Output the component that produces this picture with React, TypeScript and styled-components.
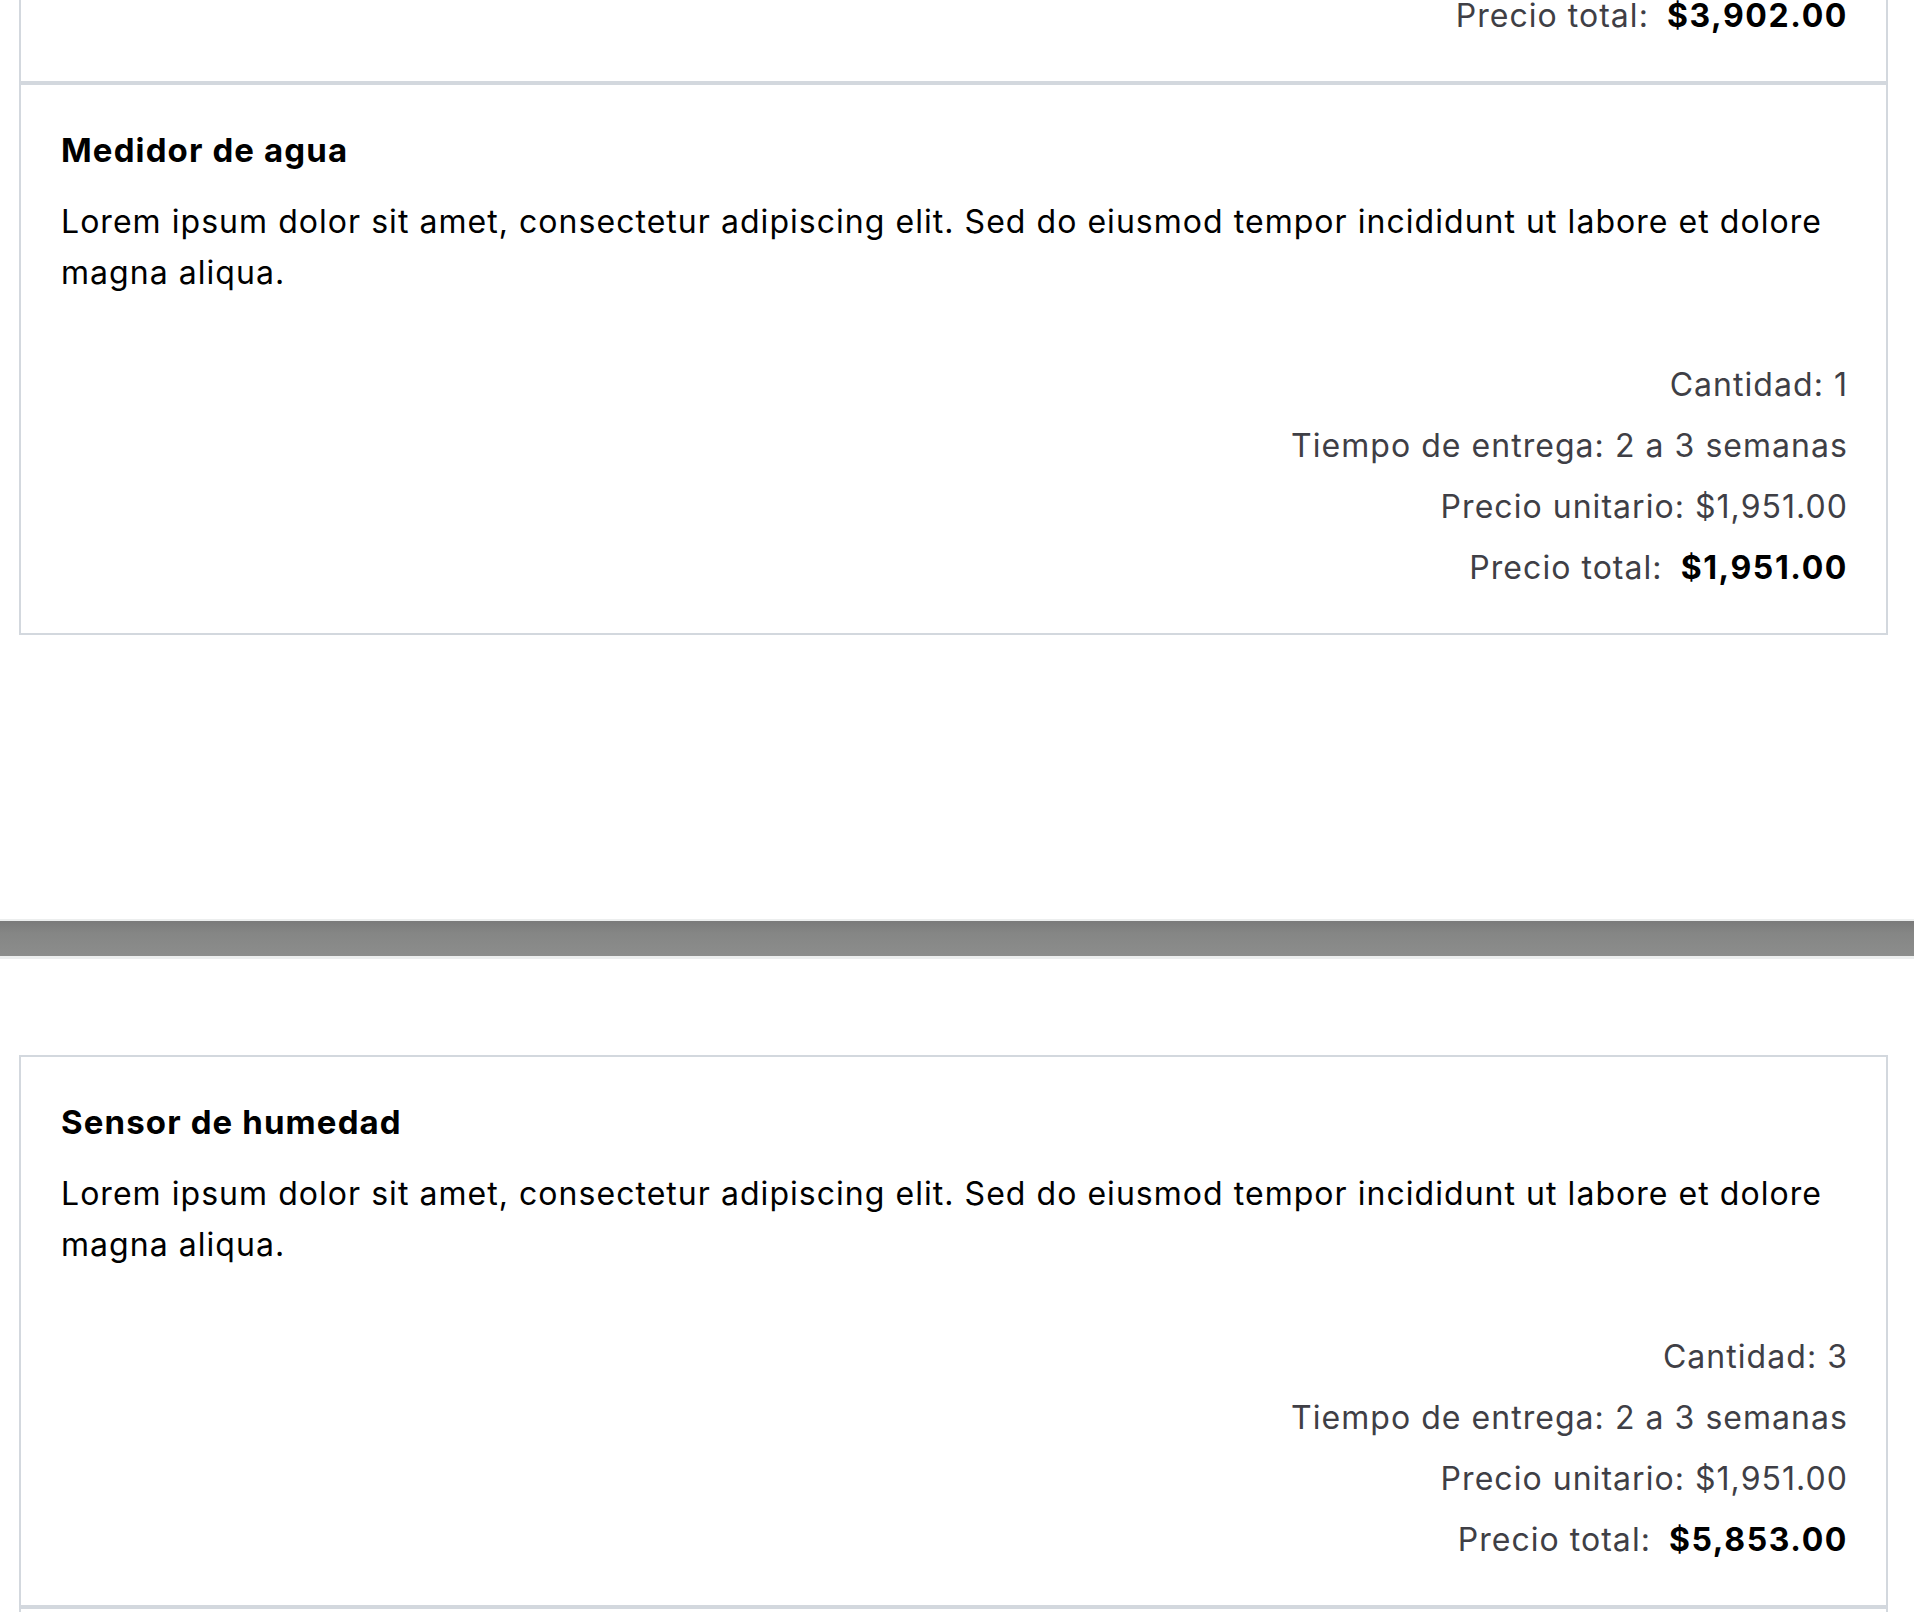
import React from "react";
import styled, { createGlobalStyle } from "styled-components";

const GlobalStyle = createGlobalStyle`
  html, body {
    margin: 0;
    padding: 0;
    background: #ffffff;
    overflow: hidden;
  }
  body {
    font-family: Inter, "Noto Sans", "Liberation Sans", sans-serif;
    color: #000000;
    letter-spacing: 0.065em;
    -webkit-font-smoothing: antialiased;
  }
  * { box-sizing: border-box; }
`;

const Viewer = styled.div`
  display: flex;
  flex-direction: column;
  width: 1914px;
  height: 1612px;
  overflow: hidden;
  background: #ffffff;
`;

const Page = styled.section<{ $top: number; $bottom: number; $shift?: number }>`
  display: flex;
  flex-direction: column;
  padding: ${(p) => p.$top}px 26px ${(p) => p.$bottom}px 19px;
  margin-top: ${(p) => (p.$shift ? `${p.$shift}px` : "0")};
  background: #ffffff;
  flex-shrink: 0;
`;

const PageBreak = styled.div`
  flex-shrink: 0;
  height: 40px;
  border-top: 2px solid #eceeee;
  border-bottom: 3px solid #eceeee;
  background: linear-gradient(to bottom, #7a7a7a 0%, #858685 35%, #8c8d8c 100%);
`;

const Card = styled.article`
  display: flex;
  flex-direction: column;
  border: 2px solid #d3d8de;
  padding: 40px;
`;

const Title = styled.h3`
  margin: 0;
  font-size: 33px;
  line-height: 51px;
  font-weight: 700;
  letter-spacing: 0.034em;
  color: #000000;
`;

const Description = styled.p`
  margin: 20px 0 0;
  font-size: 32px;
  line-height: 1.6;
  font-weight: 400;
  color: #000000;
`;

const Details = styled.div`
  display: flex;
  flex-direction: column;
  align-items: flex-end;
  gap: 10px;
  margin-top: 60px;
  margin-right: -2px;
`;

const DetailRow = styled.div`
  font-size: 32px;
  line-height: 1.6;
  color: #3f3f46;
  white-space: pre;
`;

const Total = styled.strong`
  margin-left: 8px;
  font-weight: 700;
  letter-spacing: 0.05em;
  color: #000000;
`;

type Product = {
  name: string;
  qty: number;
  unit: string;
  total: string;
};

const LOREM =
  "Lorem ipsum dolor sit amet, consectetur adipiscing elit. Sed do eiusmod tempor incididunt ut labore et dolore magna aliqua.";

const ProductCard: React.FC<{ product: Product }> = ({ product }) => (
  <Card>
    <Title>{product.name}</Title>
    <Description>{LOREM}</Description>
    <Details>
      <DetailRow>Cantidad: {product.qty}</DetailRow>
      <DetailRow>Tiempo de entrega: 2 a 3 semanas</DetailRow>
      <DetailRow>Precio unitario: {product.unit}</DetailRow>
      <DetailRow>
        Precio total: <Total>{product.total}</Total>
      </DetailRow>
    </Details>
  </Card>
);

const pageOne: Product[] = [
  { name: "Sensor de temperatura", qty: 2, unit: "$1,951.00", total: "$3,902.00" },
  { name: "Medidor de agua", qty: 1, unit: "$1,951.00", total: "$1,951.00" },
];

const pageTwo: Product[] = [
  { name: "Sensor de humedad", qty: 3, unit: "$1,951.00", total: "$5,853.00" },
  { name: "Medidor de luz", qty: 1, unit: "$1,951.00", total: "$1,951.00" },
];

export default function App() {
  return (
    <>
      <GlobalStyle />
      <Viewer>
        <Page $top={0} $bottom={284} $shift={-469}>
          {pageOne.map((p) => (
            <ProductCard key={p.name} product={p} />
          ))}
        </Page>
        <PageBreak />
        <Page $top={96} $bottom={96}>
          {pageTwo.map((p) => (
            <ProductCard key={p.name} product={p} />
          ))}
        </Page>
      </Viewer>
    </>
  );
}
